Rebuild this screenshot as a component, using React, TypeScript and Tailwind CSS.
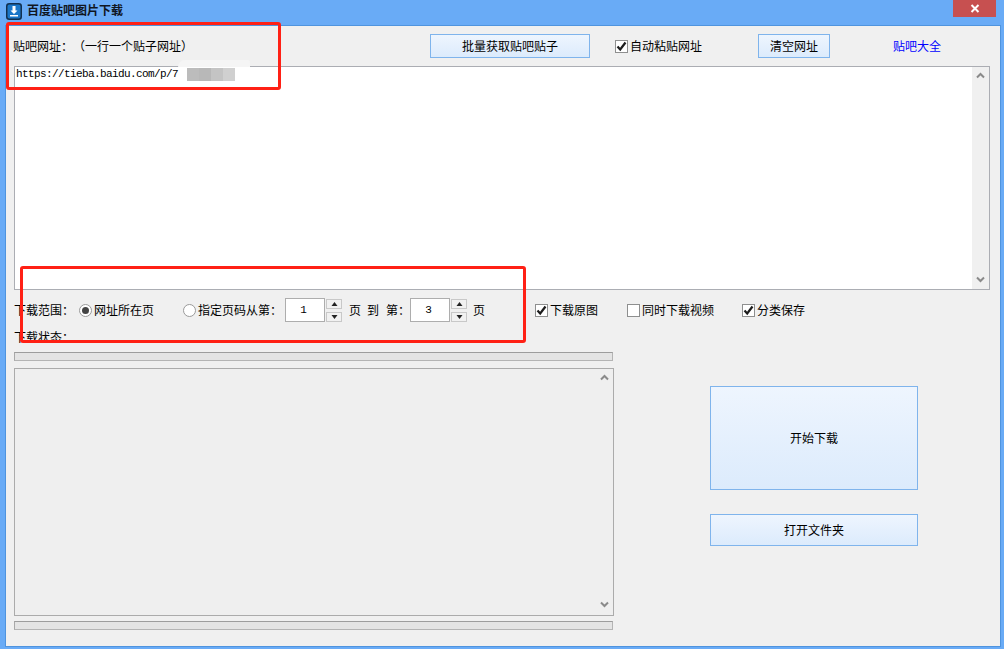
import type { ReactNode } from "react";

const font = { fontFamily: '"Noto Sans CJK SC", sans-serif' };

function Chevron({ down = false }: { down?: boolean }) {
  return (
    <svg width="9" height="7" viewBox="0 0 9 7" className="block">
      <path
        d={down ? "M1 1.5 L4.5 5 L8 1.5" : "M1 5.5 L4.5 2 L8 5.5"}
        fill="none"
        stroke="#8a8a8a"
        strokeWidth="2"
      />
    </svg>
  );
}

function Btn({ className, children }: { className: string; children: ReactNode }) {
  return (
    <div
      className={`flex shrink-0 items-center justify-center border border-[#7fb4ec] bg-gradient-to-b from-[#eef5fe] to-[#dcebfc] text-[12px] text-black ${className}`}
    >
      {children}
    </div>
  );
}

function Check({ checked = false, className, label }: { checked?: boolean; className: string; label: string }) {
  return (
    <div className={`flex shrink-0 items-center ${className}`}>
      <div className="flex h-[13px] w-[13px] items-center justify-center border border-[#8e8f8f] bg-white">
        {checked && (
          <svg width="11" height="11" viewBox="0 0 11 11">
            <path d="M1.5 5.5 L4.2 8.5 L9.5 1.5" fill="none" stroke="#1c1c1c" strokeWidth="2.2" />
          </svg>
        )}
      </div>
      <span className="ml-[2px] text-[12px] text-black">{label}</span>
    </div>
  );
}

function Radio({ checked = false, className, label }: { checked?: boolean; className: string; label: string }) {
  return (
    <div className={`flex shrink-0 items-center ${className}`}>
      <div className="flex h-[13px] w-[13px] items-center justify-center rounded-full border border-[#9a9a9a] bg-white">
        {checked && <div className="h-[7px] w-[7px] rounded-full bg-[#444444]" />}
      </div>
      <span className="ml-[2px] text-[12px] [text-spacing-trim:space-all] text-black">{label}</span>
    </div>
  );
}

function SpinArrow({ down = false }: { down?: boolean }) {
  return (
    <div className="flex h-[10px] w-[16px] items-center justify-center border border-[#c8c8c8] bg-[#f1f1f1]">
      <svg width="7" height="4" viewBox="0 0 7 4">
        <path d={down ? "M0.5 0 H6.5 L3.5 4 Z" : "M3.5 0 L6.5 4 H0.5 Z"} fill="#222222" />
      </svg>
    </div>
  );
}

function Spin({ className, value }: { className: string; value: string }) {
  return (
    <div className={`flex shrink-0 items-center ${className}`}>
      <div
        className="flex h-[24px] w-[40px] items-center justify-center border border-[#adadad] bg-white pr-[3px] text-[11px] text-black"
        style={{ fontFamily: '"Liberation Mono", monospace' }}
      >
        {value}
      </div>
      <div className="ml-px flex flex-col gap-[3px]">
        <SpinArrow />
        <SpinArrow down />
      </div>
    </div>
  );
}

function ProgressBar() {
  return (
    <div className="h-[9px] w-[599px] border border-[#b4b4b4] border-t-[#9d9d9d] border-l-[#a8a8a8] bg-[#e4e4e4]" />
  );
}

export default function App() {
  return (
    <div className="relative h-[649px] w-[1004px] overflow-hidden bg-[#69abf6]" style={font}>
      {/* title bar */}
      <div className="flex h-[25px] items-start">
        <svg width="16" height="17" viewBox="0 0 16 17" className="ml-[6px] mt-[3px] shrink-0">
          <rect x="0.75" y="0.75" width="14.5" height="15.5" rx="2.5" fill="#1a76c8" stroke="#12304f" strokeWidth="1.5" />
          <path d="M6.5 3 H9.5 V7.5 H11.5 L8 11 L4.5 7.5 H6.5 Z" fill="#ffffff" />
          <rect x="4" y="12" width="8" height="1.5" fill="#ffffff" />
        </svg>
        <span className="ml-[5px] mt-[1px] text-[12px] leading-[18px] font-bold text-[#10161f]">百度贴吧图片下载</span>
        <div className="ml-auto mr-[8px] flex h-[17px] w-[43px] items-center justify-center bg-[#c75050]">
          <svg width="10" height="9" viewBox="0 0 10 9">
            <path d="M1.5 1 L8.5 8 M8.5 1 L1.5 8" stroke="#ffffff" strokeWidth="2" />
          </svg>
        </div>
      </div>

      {/* client area */}
      <div className="ml-[5px] h-[622px] w-[996px] border border-[#4f94de] bg-[#f0f0f0] pl-[8px]">
        <div className="mt-[8px] flex h-[24px] items-center">
          <span className="-ml-px w-[417px] shrink-0 text-[12px] [text-spacing-trim:space-all] text-black">
            贴吧网址：（一行一个贴子网址）
          </span>
          <Btn className="h-[24px] w-[160px]">批量获取贴吧贴子</Btn>
          <Check checked className="ml-[25px] w-[143px]" label="自动粘贴网址" />
          <Btn className="h-[24px] w-[72px]">清空网址</Btn>
          <span className="ml-[63px] text-[12px] text-[#0000ff]">贴吧大全</span>
        </div>

        <div className="mt-[8px] flex h-[224px] w-[976px] border border-[#abadb3] bg-white">
          <div className="flex-1 pl-[1px] pt-[1px]">
            <div
              className="flex h-[13px] items-center text-[11px] leading-[13px] tracking-[-0.6px] text-black"
              style={{ fontFamily: '"Liberation Mono", monospace' }}
            >
              <span>https://tieba.baidu.com/p/7</span>
              <div className="ml-[9px] h-[13px] w-[12px] bg-[#bcbcbc]" />
              <div className="h-[13px] w-[12px] bg-[#b8b8b8]" />
              <div className="h-[13px] w-[12px] bg-[#c4c4c4]" />
              <div className="h-[13px] w-[12px] bg-[#d0d0d0]" />
            </div>
          </div>
          <div className="flex w-[17px] flex-col items-center justify-between bg-[#f0f0f0] pt-[5px] pb-[6px]">
            <Chevron />
            <Chevron down />
          </div>
        </div>

        <div className="mt-[8px] flex h-[24px] items-center">
          <span className="w-[65px] shrink-0 text-[12px] [text-spacing-trim:space-all] text-black">下载范围：</span>
          <Radio checked className="w-[104px]" label="网址所在页" />
          <Radio className="w-[102px]" label="指定页码从第：" />
          <Spin className="w-[64px]" value="1" />
          <span className="w-[18px] shrink-0 text-[12px] text-black">页</span>
          <span className="w-[19px] shrink-0 text-[12px] text-black">到</span>
          <span className="w-[24px] shrink-0 text-[12px] text-black">第：</span>
          <Spin className="w-[63px]" value="3" />
          <span className="w-[62px] shrink-0 text-[12px] text-black">页</span>
          <Check checked className="w-[92px]" label="下载原图" />
          <Check className="w-[115px]" label="同时下载视频" />
          <Check checked className="" label="分类保存" />
        </div>

        <div className="mt-[5px] h-[20px] text-[12px] leading-[20px] text-black">下载状态：</div>
        <div className="mt-[5px]">
          <ProgressBar />
        </div>

        <div className="flex">
          <div className="w-[600px] shrink-0">
            <div className="mt-[7px] flex h-[248px] w-[600px] flex-col items-end justify-between border border-[#ababab] bg-[#efefef] px-[4px] pt-[5px] pb-[7px]">
              <Chevron />
              <Chevron down />
            </div>
            <div className="mt-[5px]">
              <ProgressBar />
            </div>
          </div>
          <div className="ml-[96px] mt-[25px] flex flex-col">
            <Btn className="h-[104px] w-[208px]">开始下载</Btn>
            <Btn className="mt-[24px] h-[32px] w-[208px]">打开文件夹</Btn>
          </div>
        </div>
      </div>

      {/* smudge left by the url being blurred out */}
      <div className="absolute left-[178px] top-[60px] h-[7px] w-[72px] rounded-tl-[24px] rounded-tr-[8px] bg-[#f5f5f5]" />

      {/* red annotation boxes drawn over the window */}
      <div className="absolute left-[6px] top-[22px] h-[68px] w-[275px] rounded-[3px] border-[3px] border-[#ff2015]" />
      <div className="absolute left-[20px] top-[266px] h-[77px] w-[506px] rounded-[3px] border-[3px] border-[#ff2015]" />
    </div>
  );
}
